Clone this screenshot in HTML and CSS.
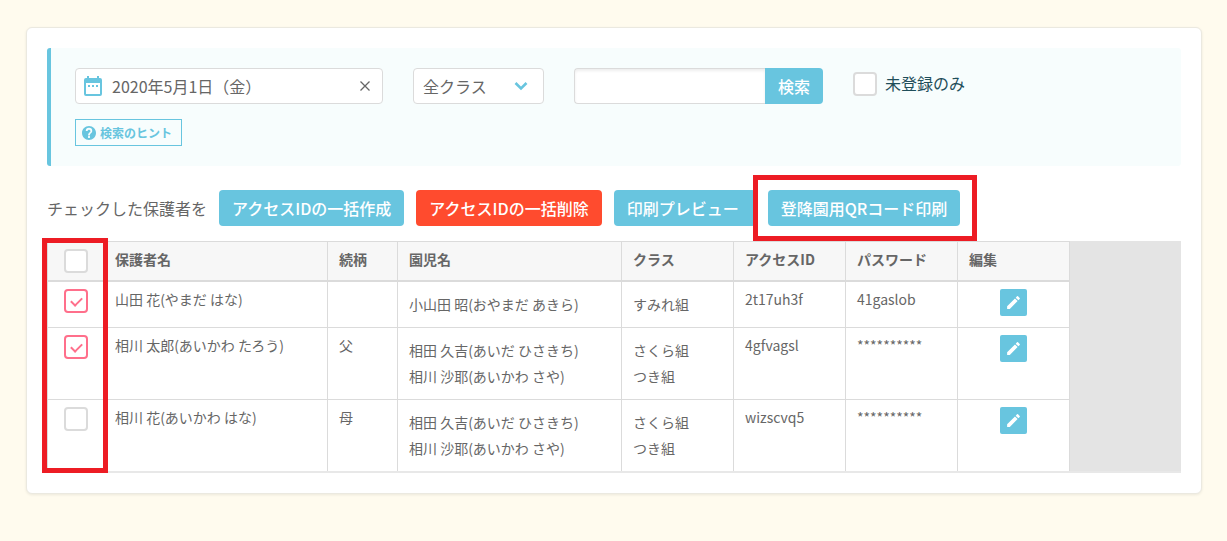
FILE: index.html
```html
<!DOCTYPE html>
<html lang="ja">
<head>
<meta charset="utf-8">
<meta name="viewport" content="width=device-width, initial-scale=1">
<title>保護者アクセスID管理</title>
<link rel="stylesheet" href="styles.css">
</head>
<body>
<svg class="sprite" aria-hidden="true">
  <symbol id="pencil" viewBox="0 0 24 24"><path d="M3 17.25V21h3.75L17.81 9.94l-3.75-3.75L3 17.25zM20.71 7.04a1 1 0 0 0 0-1.41l-2.34-2.34a1 1 0 0 0-1.41 0l-1.83 1.83 3.75 3.75 1.83-1.83z"/></symbol>
</svg>
<main class="card">
  <form class="search">
    <div class="search-row">
      <div class="date-field">
        <svg class="date-icon" viewBox="0 0 18 20" aria-hidden="true"><path fill-rule="evenodd" d="M3 0h2v2h8V0h2v2h1a2 2 0 0 1 2 2v14a2 2 0 0 1-2 2H2a2 2 0 0 1-2-2V4a2 2 0 0 1 2-2h1zM2 7v11h14V7zM4 9h2v2H4zM8 9h2v2H8zM12 9h2v2h-2z"/></svg>
        <input class="date-input" type="text" aria-label="日付" value="2020年5月1日（金）">
        <button class="clear" type="button" aria-label="日付をクリア"><svg viewBox="0 0 10 10" aria-hidden="true"><path d="M0.5 0.5l9 9M9.5 0.5l-9 9"/></svg></button>
      </div>
      <div class="class-field">
        <select class="class-select" aria-label="クラス"><option>全クラス</option></select>
        <svg class="chevron" viewBox="0 0 14 10" aria-hidden="true"><path d="M1.500 2l5.500 5.500L12.500 2"/></svg>
      </div>
      <div class="keyword">
        <input class="keyword-input" type="text" aria-label="キーワード">
        <button class="keyword-button" type="button">検索</button>
      </div>
      <label class="only"><input class="check" type="checkbox"><span class="only-text">未登録のみ</span></label>
    </div>
    <button class="hint" type="button">
      <svg class="hint-icon" viewBox="2 2 20 20" aria-hidden="true"><path d="M12 2C6.480 2 2 6.480 2 12s4.480 10 10 10 10-4.480 10-10S17.520 2 12 2zm1.300 17h-2.600v-2.600h2.600V19zm2.300-7.500l-.9.92c-.9.9-1.400 1.580-1.400 3.080h-2.600v-.5c0-1.100.45-2.100 1.170-2.830l1.240-1.260A2 2 0 0 0 12 7.200a2 2 0 0 0-2 2H7.400a4.600 4.600 0 0 1 9.200 0c0 .9-.4 1.700-1 2.300z"/></svg>
      検索のヒント
    </button>
  </form>

  <div class="actions">
    <span>チェックした保護者を</span>
    <button class="button" type="button">アクセスIDの一括作成</button>
    <button class="button button-danger" type="button">アクセスIDの一括削除</button>
    <button class="button button-preview" type="button">印刷プレビュー</button>
    <div class="marked">
      <button class="button" type="button">登降園用QRコード印刷</button>
      <span class="mark mark-button"></span>
    </div>
  </div>

  <div class="grid">
    <table class="table">
      <colgroup>
        <col class="col-check"><col class="col-name"><col class="col-relation"><col class="col-name"><col class="col-data"><col class="col-data"><col class="col-data"><col class="col-data">
      </colgroup>
      <thead>
        <tr>
          <th class="cell-check"><input class="check" type="checkbox" aria-label="すべて選択"></th>
          <th>保護者名</th><th>続柄</th><th>園児名</th><th>クラス</th><th>アクセスID</th><th>パスワード</th><th>編集</th>
        </tr>
      </thead>
      <tbody>
        <tr>
          <td class="cell-check"><input class="check" type="checkbox" aria-label="山田 花を選択" checked></td>
          <td>山田 花(やまだ はな)</td>
          <td></td>
          <td class="cell-list">小山田 昭(おやまだ あきら)</td>
          <td class="cell-list">すみれ組</td>
          <td>2t17uh3f</td>
          <td>41gaslob</td>
          <td class="cell-edit"><button class="edit" type="button" aria-label="編集"><svg><use href="#pencil"/></svg></button></td>
        </tr>
        <tr>
          <td class="cell-check"><input class="check" type="checkbox" aria-label="相川 太郎を選択" checked></td>
          <td>相川 太郎(あいかわ たろう)</td>
          <td>父</td>
          <td class="cell-list">相田 久吉(あいだ ひさきち)<br>相川 沙耶(あいかわ さや)</td>
          <td class="cell-list">さくら組<br>つき組</td>
          <td>4gfvagsl</td>
          <td>**********</td>
          <td class="cell-edit"><button class="edit" type="button" aria-label="編集"><svg><use href="#pencil"/></svg></button></td>
        </tr>
        <tr>
          <td class="cell-check"><input class="check" type="checkbox" aria-label="相川 花を選択"></td>
          <td>相川 花(あいかわ はな)</td>
          <td>母</td>
          <td class="cell-list">相田 久吉(あいだ ひさきち)<br>相川 沙耶(あいかわ さや)</td>
          <td class="cell-list">さくら組<br>つき組</td>
          <td>wizscvq5</td>
          <td>**********</td>
          <td class="cell-edit"><button class="edit" type="button" aria-label="編集"><svg><use href="#pencil"/></svg></button></td>
        </tr>
      </tbody>
    </table>
    <span class="mark mark-column"></span>
  </div>
</main>
</body>
</html>
```
FILE: styles.css
```css
:root {
  --blue: #68c5df;
  --line: #dbdbdb;
  --red: #ed1c24;
  --pink: #ff6f8b;
}

* {
  box-sizing: border-box;
}

body {
  margin: 0;
  padding: 27px 25px 27px 26px;
  background: #fffbee;
  color: #666;
  font: 16px/24px "Noto Sans CJK JP", sans-serif;
}

button,
input,
select {
  margin: 0;
  font: inherit;
  color: inherit;
}

button {
  padding: 0;
  border: 0;
  cursor: pointer;
}

.sprite {
  position: absolute;
  width: 0;
  height: 0;
}

.card {
  padding: 20px;
  background: #fff;
  border: 1px solid #ebe9e0;
  border-radius: 6px;
  box-shadow: 0 1px 3px rgba(0, 0, 0, 0.08);
}

/* Search panel */
.search {
  padding: 20px 24px;
  background: #f7fdfd;
  border-left: 4px solid var(--blue);
  border-radius: 3px;
}

.search-row {
  display: flex;
  gap: 30px;
  margin-bottom: 15px;
}

.date-field,
.class-select,
.keyword-input {
  height: 36px;
  background: #fff;
  border: 1px solid var(--line);
  border-radius: 4px;
}

.date-field {
  display: flex;
  align-items: center;
  width: 308px;
  padding: 0 12px 0 8px;
}

.date-icon {
  width: 18px;
  height: 20px;
  fill: var(--blue);
}

.date-input {
  flex: 1;
  min-width: 0;
  padding: 0 10px;
  border: 0;
  background: none;
}

.clear {
  display: flex;
  background: none;
}

.clear svg {
  width: 10px;
  height: 10px;
  stroke: #666;
  stroke-width: 1.3;
}

.class-field {
  display: grid;
  align-items: center;
  width: 131px;
}

.class-select {
  grid-area: 1 / 1;
  width: 100%;
  padding: 0 9px;
  appearance: none;
}

.chevron {
  grid-area: 1 / 1;
  justify-self: end;
  width: 14px;
  height: 10px;
  margin-right: 16px;
  fill: none;
  stroke: var(--blue);
  stroke-width: 2.6;
  pointer-events: none;
}

.keyword {
  display: flex;
}

.keyword-input {
  width: 191px;
  padding: 0 10px;
  border-right: 0;
  border-radius: 4px 0 0 4px;
  box-shadow: inset 0 2px 3px rgba(0, 0, 0, 0.07);
}

.keyword-button {
  width: 58px;
  background: var(--blue);
  border-radius: 0 4px 4px 0;
  color: #fff;
  font-weight: 500;
}

.only {
  display: flex;
  gap: 8px;
  align-items: center;
  height: 32px;
  color: #1f4e5a;
}

.only-text {
  padding-bottom: 2px;
}

.check {
  display: block;
  width: 24px;
  height: 24px;
  border: 2px solid var(--line);
  border-radius: 4px;
  background: #fff;
  appearance: none;
}

.check:checked {
  border-color: var(--pink);
}

.check:checked::before {
  content: "";
  display: block;
  width: 10px;
  height: 5px;
  margin: 6px 5px;
  border: solid var(--pink);
  border-width: 0 0 2px 2px;
  transform: rotate(-45deg);
}

.hint {
  display: flex;
  gap: 4px;
  align-items: center;
  height: 27px;
  padding: 0 9px 0 6px;
  background: none;
  border: 1px solid var(--blue);
  color: var(--blue);
  font-size: 12px;
  font-weight: 700;
}

.hint-icon {
  width: 14px;
  height: 14px;
  fill: currentColor;
}

/* Bulk actions */
.actions {
  display: flex;
  gap: 12px;
  align-items: center;
  margin: 24px 0 15px;
  white-space: nowrap;
}

.button {
  height: 36px;
  padding: 0 13px;
  background: var(--blue);
  border-radius: 4px;
  color: #fff;
  font-weight: 500;
}

.button-danger {
  background: #ff4b2e;
}

.button-preview {
  padding-right: 17px;
}

.marked {
  position: relative;
}

.mark {
  position: absolute;
  border: 5px solid var(--red);
  pointer-events: none;
}

.mark-button {
  inset: -15px -17px -15px -15px;
}

.mark-column {
  top: -3px;
  bottom: -2px;
  left: -5px;
  width: 66px;
}

/* Guardian table */
.grid {
  position: relative;
  background: #e4e4e4;
  border-bottom: 2px solid #e8e8e8;
}

.table {
  width: 1023px;
  table-layout: fixed;
  border-spacing: 0;
  border-left: 1px solid var(--line);
  background: #fff;
  font-size: 14px;
  line-height: 20px;
}

.col-check {
  width: 56px;
}

.col-name {
  width: 224px;
}

.col-relation {
  width: 70px;
}

.col-data {
  width: 112px;
}

.table th,
.table td {
  padding: 7px 11px;
  border-right: 1px solid var(--line);
  text-align: left;
  vertical-align: top;
}

.table th {
  background: #f7f7f7;
  border-top: 1px solid var(--line);
  border-bottom: 2px solid var(--line);
}

.table tr + tr td {
  border-top: 1px solid var(--line);
}

.table .cell-check {
  padding: 7px 0;
}

.cell-check .check {
  margin: 0 auto;
}

.cell-check .check:checked::before {
  width: 9px;
  margin: 6px 5px;
}

.table .cell-list {
  padding: 9px 11px 10px;
  line-height: 26px;
}

.table .cell-edit {
  padding: 7px 0;
}

.edit {
  display: flex;
  align-items: center;
  justify-content: center;
  width: 27px;
  height: 27px;
  margin: 0 auto;
  background: var(--blue);
  border-radius: 2px;
}

.edit svg {
  width: 17px;
  height: 17px;
  fill: #fff;
}
```
